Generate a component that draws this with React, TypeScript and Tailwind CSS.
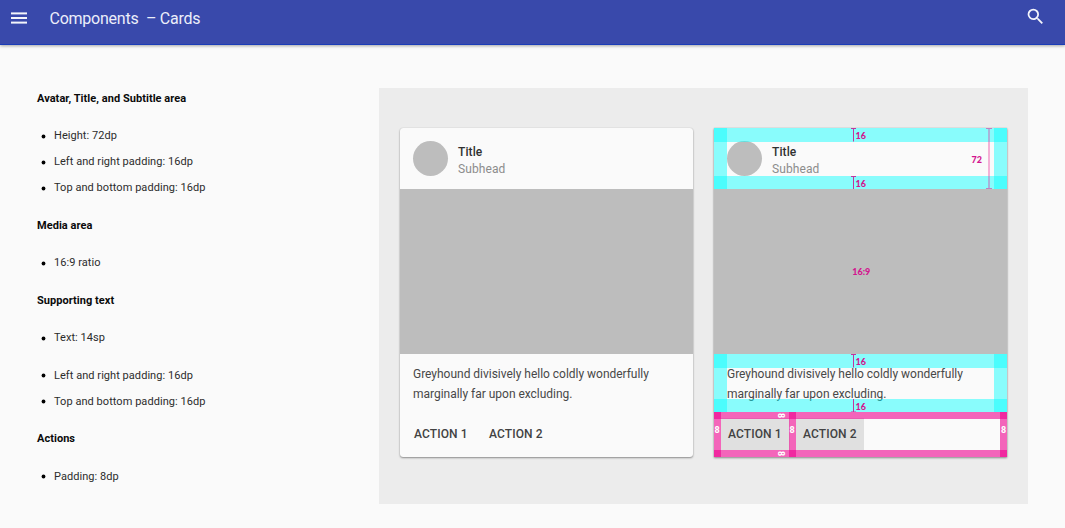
import type { ReactNode } from "react";

type Block = { title?: string; items: string[] };

const blocks: Block[] = [
  {
    title: "Avatar, Title, and Subtitle area",
    items: ["Height: 72dp", "Left and right padding: 16dp", "Top and bottom padding: 16dp"],
  },
  { title: "Media area", items: ["16:9 ratio"] },
  { title: "Supporting text", items: ["Text: 14sp"] },
  { items: ["Left and right padding: 16dp", "Top and bottom padding: 16dp"] },
  { title: "Actions", items: ["Padding: 8dp"] },
];

function AppBar() {
  return (
    <header className="flex h-[45px] items-start border-b border-[#1a3cb8] bg-[#3949ab] pr-[19px] pl-[11px] shadow-[0_1px_3px_rgba(0,0,0,0.35)]">
      <svg className="mt-[12px] h-[12px] w-[16px]" viewBox="0 0 16 12" fill="#f4f5fb">
        <rect y="0.4" width="16" height="2" />
        <rect y="5" width="16" height="2" />
        <rect y="9.6" width="16" height="2" />
      </svg>
      <h1 className="flex-1 pt-[6.5px] pl-[22.5px] text-[16px] leading-[24px] tracking-[-0.24px] whitespace-pre text-[#eceefa]">
        {"Components  – Cards"}
      </h1>
      <svg className="mt-[6px] size-[21px]" viewBox="0 0 24 24" fill="#f4f5fb">
        <path d="M15.5 14h-.79l-.28-.27A6.471 6.471 0 0 0 16 9.5 6.5 6.5 0 1 0 9.5 16c1.61 0 3.09-.59 4.23-1.57l.27.28v.79l5 4.99L20.49 19l-4.99-5zm-6 0C7.01 14 5 11.99 5 9.5S7.01 5 9.5 5 14 7.01 14 9.5 11.99 14 9.5 14z" />
      </svg>
    </header>
  );
}

function Specs() {
  return (
    <section className="flex w-[379px] flex-col gap-[11.5px] pt-[40.5px] pl-[37px] text-[11px] leading-[26px] text-[#2c2c2c]">
      {blocks.map((block, i) => (
        <div key={i} className="flex flex-col gap-[11.5px]">
          {block.title && <h2 className="font-bold tracking-[0.04px] text-[#0a0a0a]">{block.title}</h2>}
          <ul>
            {block.items.map((item) => (
              <li key={item} className="flex items-center gap-[8px] pl-[4px] tracking-[0.05px]">
                <svg className="size-[5px]" viewBox="0 0 5 5">
                  <circle cx="2.5" cy="2.5" r="1.9" />
                </svg>
                {item}
              </li>
            ))}
          </ul>
        </div>
      ))}
    </section>
  );
}

function Card({ spec = false, children }: { spec?: boolean; children?: ReactNode }) {
  const shape = spec ? "" : "rounded-[3px]";
  const button = spec ? "bg-[#e0e0e0]" : "";
  return (
    <article
      className={`relative flex h-[329px] w-[293.5px] flex-col bg-[#fafafa] shadow-[0_1px_2px_rgba(0,0,0,0.4),0_0_1px_rgba(0,0,0,0.2)] ${shape}`}
    >
      <div className="flex h-[61px] shrink-0 items-center gap-[10.5px] pl-[13.5px]">
        <span className="size-[34.5px] rounded-full bg-[#bdbdbd]" />
        <div className="pt-[4px] text-[12px] leading-[17px]">
          <p className="font-medium tracking-[0.1px] text-[#303030]">Title</p>
          <p className="tracking-[0.1px] text-[#8c8c8c]">Subhead</p>
        </div>
      </div>
      <div className="h-[165px] shrink-0 bg-[#bdbdbd]" />
      <p className="h-[58px] shrink-0 pt-[9.5px] pl-[13.5px] text-[12px] leading-[20.5px] tracking-[-0.02px] whitespace-pre text-[#484848]">
        {"Greyhound divisively hello coldly wonderfully\nmarginally far upon excluding."}
      </p>
      <div className="flex flex-1 gap-[6px] px-[7px] pt-[6px] pb-[7px] text-[12px] font-medium tracking-[0.1px] text-[#424242]">
        <span className={`flex w-[69px] items-center pl-[7.5px] whitespace-nowrap ${button}`}>ACTION 1</span>
        <span className={`flex w-[68.5px] items-center pl-[7.5px] whitespace-nowrap ${button}`}>ACTION 2</span>
      </div>
      {children}
    </article>
  );
}

/* A full-width padding band with its measured value. */
function Band({ flip = false }: { flip?: boolean }) {
  return (
    <div className="flex h-[13.5px] items-center bg-[#00ffff]/45 pl-[137px]">
      <svg className="h-[13.5px] w-[5px]" viewBox="0 0 5 13.5" fill="none" stroke="#c2359f">
        <path d={flip ? "M0 13H5M2.5 0V13" : "M0 .5H5M2.5 .5V13.5"} />
      </svg>
      <span className="pt-[1.5px] font-['Lato'] text-[9px] leading-none font-black">16</span>
    </div>
  );
}

function PaddingArea({ height, children }: { height: string; children?: ReactNode }) {
  return (
    <div className={`grid ${height}`}>
      <div className="col-start-1 row-start-1 flex flex-col justify-between">
        <Band />
        <Band flip={!children} />
      </div>
      <div className="col-start-1 row-start-1 flex justify-between">
        <div className="w-[13.5px] bg-[#00ffff]/45" />
        <div className="flex flex-1 items-center justify-end gap-[3.5px] pr-[2px]">{children}</div>
        <div className="w-[13.5px] bg-[#00ffff]/45" />
      </div>
    </div>
  );
}

function PinkRow() {
  return (
    <div className="flex h-[7px] items-center bg-[#ee0290]/60 pl-[64px]">
      <span className="rotate-90 text-[9px] leading-none font-bold text-white">8</span>
    </div>
  );
}

function PinkColumn() {
  return (
    <div className="flex w-[7px] justify-center bg-[#ee0290]/60 pt-[14px]">
      <span className="text-[9px] leading-[9px] font-bold text-white">8</span>
    </div>
  );
}

function Keylines() {
  return (
    <div className="absolute inset-0 flex flex-col text-[#d3148f]">
      <PaddingArea height="h-[61px]">
        <span className="pt-[2px] font-['Lato'] text-[9px] leading-none font-black">72</span>
        <svg className="h-[61px] w-[6px]" viewBox="0 0 6 61" fill="none" stroke="#e91e90" strokeOpacity="0.55">
          <path d="M0 .5H6M3 0V61M0 60.5H6" strokeWidth="1.2" />
        </svg>
      </PaddingArea>
      <div className="flex h-[165px] items-center justify-center pb-[1px] pl-[2px]">
        <span className="font-['Lato'] text-[9px] leading-none font-black">16:9</span>
      </div>
      <PaddingArea height="h-[58px]" />
      <div className="grid flex-1 pb-[0.5px]">
        <div className="col-start-1 row-start-1 flex flex-col justify-between">
          <PinkRow />
          <PinkRow />
        </div>
        <div className="col-start-1 row-start-1 flex">
          <PinkColumn />
          <div className="w-[68px]" />
          <PinkColumn />
          <div className="flex-1" />
          <PinkColumn />
        </div>
      </div>
    </div>
  );
}

export default function App() {
  return (
    <div className="h-[528px] w-[1065px] overflow-hidden bg-[#fafafa] font-['Roboto',sans-serif]">
      <AppBar />
      <main className="flex">
        <Specs />
        <section className="mt-[43px] flex h-[416px] w-[649px] items-start gap-[20.5px] bg-[#ececec] pt-[40px] pl-[20.5px]">
          <Card />
          <Card spec>
            <Keylines />
          </Card>
        </section>
      </main>
    </div>
  );
}
